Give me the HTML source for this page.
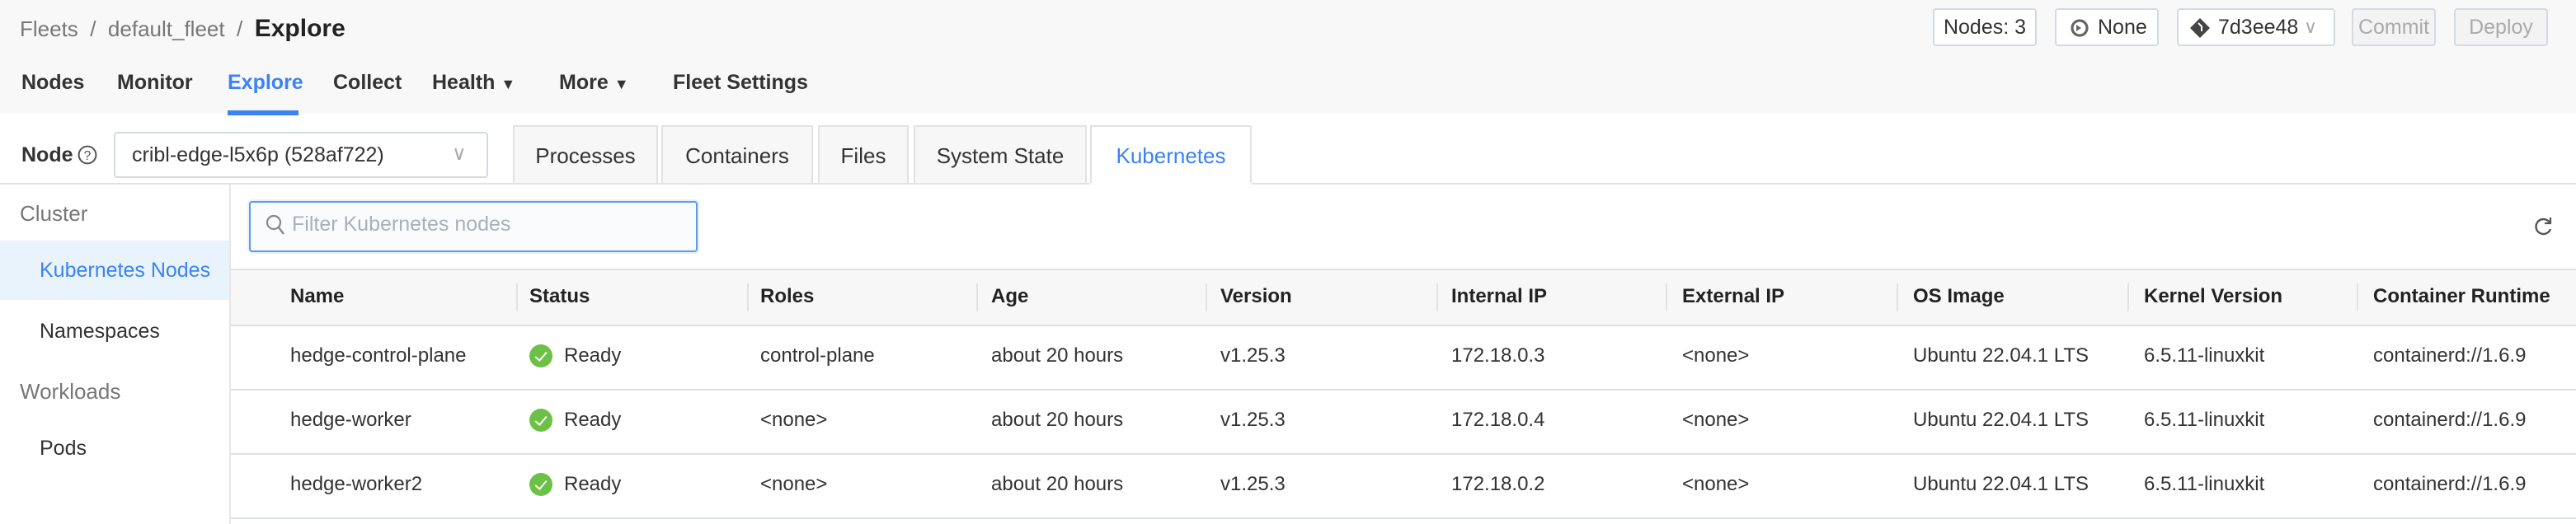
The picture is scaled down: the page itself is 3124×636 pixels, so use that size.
<!DOCTYPE html>
<html><head><meta charset="utf-8"><style>
html,body{margin:0;padding:0;}
body{width:1562px;height:318px;zoom:2;overflow:hidden;background:#fff;font-family:"Liberation Sans",sans-serif;font-size:12.5px;color:#333;position:relative;}
.a{position:absolute;white-space:nowrap;}
.hdr{position:absolute;left:0;top:0;width:1562px;height:69px;background:#f8f8f8;}
.btn{position:absolute;top:5px;height:21px;border:1px solid #d4dae2;border-radius:2px;background:#fff;line-height:21px;font-size:12.5px;color:#333;box-sizing:content-box;}
.btn.dis{background:#f3f3f3;color:#aaa;}
.nav{position:absolute;top:43px;font-weight:bold;font-size:12.5px;color:#333;}
.tab{position:absolute;top:76px;height:35px;background:#f7f7f7;border:1px solid #e2e2e2;border-bottom:none;box-sizing:border-box;line-height:35px;text-align:center;font-size:13px;color:#333;}
.th{position:absolute;top:163px;height:34px;line-height:34px;font-weight:bold;font-size:12px;color:#222;}
.td{position:absolute;font-size:12px;color:#333;}
.sep{position:absolute;top:172px;width:1px;height:17px;background:#e3e3e3;}
.rl{position:absolute;left:140px;width:1422px;height:1px;background:#dde2e8;}
.chk{position:absolute;left:-21px;top:0px;width:14px;height:14px;border-radius:50%;background:#6bc046;}
.chk:after{content:"";position:absolute;left:5px;top:3px;width:3px;height:6px;border:solid #fff;border-width:0 1.3px 1.3px 0;transform:rotate(40deg);}
</style></head><body>
<div class="hdr"></div>
<div class="a" style="left:12px;top:9px;font-size:13px;color:#777;">Fleets &nbsp;/&nbsp; default_fleet &nbsp;/&nbsp; <span style="color:#222;font-size:15px;font-weight:bold;">Explore</span></div>

<div class="btn" style="left:1172px;width:61px;text-align:center;">Nodes: 3</div>
<div class="btn" style="left:1246px;width:61px;"><svg style="position:absolute;left:8px;top:5px" width="12" height="12" viewBox="0 0 12 12"><circle cx="6" cy="6" r="4.5" fill="none" stroke="#666" stroke-width="1.6"/><path d="M4 4 L7 6 L4 8Z" fill="#666"/></svg><span style="position:absolute;left:25px;">None</span></div>
<div class="btn" style="left:1320px;width:94px;"><svg style="position:absolute;left:7px;top:5px" width="12" height="12" viewBox="0 0 12 12"><path d="M6 0 L12 6 L6 12 L0 6Z" fill="#444"/><path d="M5 3 L7 5 L7 8" stroke="#fff" stroke-width="1" fill="none"/></svg><span style="position:absolute;left:24px;">7d3ee48</span><span style="position:absolute;left:76px;color:#aaa;font-size:11px;">∨</span></div>
<div class="btn dis" style="left:1426px;width:49px;text-align:center;">Commit</div>
<div class="btn dis" style="left:1488px;width:55px;text-align:center;">Deploy</div>

<div class="nav" style="left:13px;">Nodes</div>
<div class="nav" style="left:71px;">Monitor</div>
<div class="nav" style="left:138px;color:#3a82f6;">Explore</div>
<div style="position:absolute;left:138px;top:67px;width:43px;height:3px;background:#3a82f6;"></div>
<div class="nav" style="left:202px;">Collect</div>
<div class="nav" style="left:262px;">Health <span style="font-size:9px;">▼</span></div>
<div class="nav" style="left:339px;">More <span style="font-size:9px;">▼</span></div>
<div class="nav" style="left:408px;">Fleet Settings</div>

<div class="a" style="left:13px;top:87px;font-weight:bold;font-size:12.5px;">Node</div>
<svg class="a" style="left:47px;top:88px" width="12" height="12" viewBox="0 0 12 12"><circle cx="6" cy="6" r="5.2" fill="none" stroke="#555" stroke-width="1"/><text x="6" y="9" font-size="8" text-anchor="middle" fill="#555" font-family="Liberation Sans">?</text></svg>
<div style="position:absolute;left:69px;top:80px;width:227px;height:28px;border:1px solid #d4dae2;border-radius:2px;box-sizing:border-box;"></div>
<div class="a" style="left:80px;top:87px;">cribl-edge-l5x6p (528af722)</div>
<div class="a" style="left:274px;top:86px;color:#aaa;font-size:12px;">∨</div>

<div class="tab" style="left:311px;width:88px;">Processes</div>
<div class="tab" style="left:401px;width:92px;">Containers</div>
<div class="tab" style="left:496px;width:55px;">Files</div>
<div class="tab" style="left:554px;width:105px;">System State</div>
<div class="tab" style="left:661px;width:98px;background:#fff;color:#3a82f6;height:36px;">Kubernetes</div>
<div style="position:absolute;left:0;top:111px;width:1562px;height:1px;background:#e2e2e2;"></div>
<div style="position:absolute;left:661px;top:111px;width:98px;height:1px;background:#fff;"></div>

<div style="position:absolute;left:139px;top:112px;width:1px;height:206px;background:#e6e6e6;"></div>
<div class="a" style="left:12px;top:122px;font-size:13px;color:#777;">Cluster</div>
<div style="position:absolute;left:0;top:146px;width:139px;height:36px;background:#e8f3fc;"></div>
<div class="a" style="left:24px;top:157px;color:#3a82f6;font-size:12.5px;">Kubernetes Nodes</div>
<div class="a" style="left:24px;top:194px;">Namespaces</div>
<div class="a" style="left:12px;top:230px;font-size:13px;color:#777;">Workloads</div>
<div class="a" style="left:24px;top:265px;">Pods</div>

<div style="position:absolute;left:151px;top:122px;width:272px;height:31px;border:1px solid #5b9bf0;border-radius:2px;box-sizing:border-box;background:#f9fbfd;box-shadow:0 0 0 1px #e4efff;"></div>
<svg class="a" style="left:161px;top:130px" width="12" height="14" viewBox="0 0 12 14"><circle cx="5" cy="5" r="4" fill="none" stroke="#888" stroke-width="1.1"/><path d="M8 8 L11 12" stroke="#888" stroke-width="1.2"/></svg>
<div class="a" style="left:177px;top:129px;color:#aab0b8;font-size:12.5px;">Filter Kubernetes nodes</div>
<svg class="a" style="left:1536px;top:131px" width="12" height="13" viewBox="0 0 12 13"><path d="M10 4 A4.5 4.5 0 1 0 10.5 8" fill="none" stroke="#555" stroke-width="1.2"/><path d="M10.5 1 L10.5 4.5 L7 4.5" fill="none" stroke="#555" stroke-width="1.1"/></svg>

<div style="position:absolute;left:140px;top:163px;width:1422px;height:34px;background:#f7f7f7;"></div>
<div class="rl" style="top:163px"></div>
<div class="rl" style="top:197px"></div>
<div class="rl" style="top:236px"></div>
<div class="rl" style="top:275px"></div>
<div class="rl" style="top:314px"></div>
<div class="sep" style="left:313px"></div><div class="sep" style="left:453px"></div><div class="sep" style="left:592px"></div><div class="sep" style="left:731px"></div><div class="sep" style="left:871px"></div><div class="sep" style="left:1010px"></div><div class="sep" style="left:1150px"></div><div class="sep" style="left:1290px"></div><div class="sep" style="left:1429px"></div>

<div class="th" style="left:176px">Name</div>
<div class="th" style="left:321px">Status</div>
<div class="th" style="left:461px">Roles</div>
<div class="th" style="left:601px">Age</div>
<div class="th" style="left:740px">Version</div>
<div class="th" style="left:880px">Internal IP</div>
<div class="th" style="left:1020px">External IP</div>
<div class="th" style="left:1160px">OS Image</div>
<div class="th" style="left:1300px">Kernel Version</div>
<div class="th" style="left:1439px">Container Runtime</div>

<div class="td" style="left:176px;top:209px">hedge-control-plane</div>
<div class="td" style="left:342px;top:209px"><span class="chk"></span>Ready</div>
<div class="td" style="left:461px;top:209px">control-plane</div>
<div class="td" style="left:601px;top:209px">about 20 hours</div>
<div class="td" style="left:740px;top:209px">v1.25.3</div>
<div class="td" style="left:880px;top:209px">172.18.0.3</div>
<div class="td" style="left:1020px;top:209px">&lt;none&gt;</div>
<div class="td" style="left:1160px;top:209px">Ubuntu 22.04.1 LTS</div>
<div class="td" style="left:1300px;top:209px">6.5.11-linuxkit</div>
<div class="td" style="left:1439px;top:209px">containerd://1.6.9</div>

<div class="td" style="left:176px;top:248px">hedge-worker</div>
<div class="td" style="left:342px;top:248px"><span class="chk"></span>Ready</div>
<div class="td" style="left:461px;top:248px">&lt;none&gt;</div>
<div class="td" style="left:601px;top:248px">about 20 hours</div>
<div class="td" style="left:740px;top:248px">v1.25.3</div>
<div class="td" style="left:880px;top:248px">172.18.0.4</div>
<div class="td" style="left:1020px;top:248px">&lt;none&gt;</div>
<div class="td" style="left:1160px;top:248px">Ubuntu 22.04.1 LTS</div>
<div class="td" style="left:1300px;top:248px">6.5.11-linuxkit</div>
<div class="td" style="left:1439px;top:248px">containerd://1.6.9</div>

<div class="td" style="left:176px;top:287px">hedge-worker2</div>
<div class="td" style="left:342px;top:287px"><span class="chk"></span>Ready</div>
<div class="td" style="left:461px;top:287px">&lt;none&gt;</div>
<div class="td" style="left:601px;top:287px">about 20 hours</div>
<div class="td" style="left:740px;top:287px">v1.25.3</div>
<div class="td" style="left:880px;top:287px">172.18.0.2</div>
<div class="td" style="left:1020px;top:287px">&lt;none&gt;</div>
<div class="td" style="left:1160px;top:287px">Ubuntu 22.04.1 LTS</div>
<div class="td" style="left:1300px;top:287px">6.5.11-linuxkit</div>
<div class="td" style="left:1439px;top:287px">containerd://1.6.9</div>
</body></html>
